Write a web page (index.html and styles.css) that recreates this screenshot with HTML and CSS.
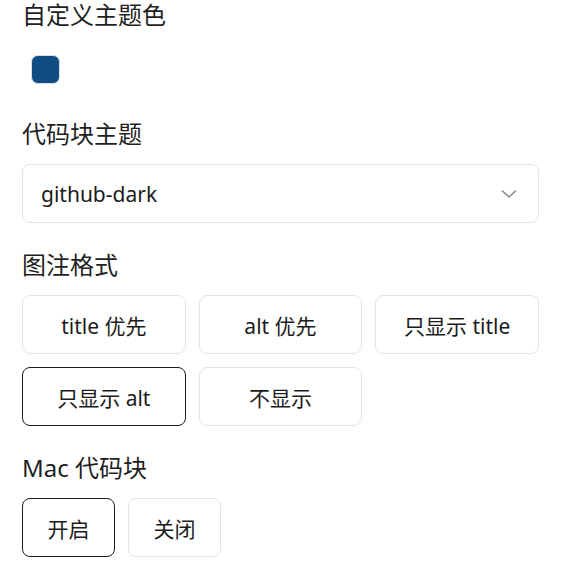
FILE: index.html
```html
<!DOCTYPE html>
<html lang="zh-CN">
<head>
<meta charset="utf-8">
<title>设置</title>
<link rel="stylesheet" href="styles.css">
</head>
<body>
<div class="panel">
  <section class="section">
    <h2 class="title">自定义主题色</h2>
    <div class="swatch-row">
      <button class="swatch" aria-label="#0f4c81"></button>
    </div>
  </section>

  <section class="section">
    <h2 class="title">代码块主题</h2>
    <div class="select">
      <span class="select-value">github-dark</span>
      <svg class="chevron" width="16" height="10" viewBox="0 0 16 10" aria-hidden="true">
        <path d="M1.5 2 L8 8 L14.5 2" fill="none" stroke="#8a8a8a" stroke-width="1.6" stroke-linecap="round" stroke-linejoin="round"/>
      </svg>
    </div>
  </section>

  <section class="section">
    <h2 class="title">图注格式</h2>
    <div class="options-grid">
      <button class="opt">title 优先</button>
      <button class="opt">alt 优先</button>
      <button class="opt">只显示 title</button>
      <button class="opt active">只显示 alt</button>
      <button class="opt">不显示</button>
    </div>
  </section>

  <section class="section">
    <h2 class="title">Mac 代码块</h2>
    <div class="options-row">
      <button class="opt pill active">开启</button>
      <button class="opt pill">关闭</button>
    </div>
  </section>
</div>
</body>
</html>
```

FILE: styles.css
```css
* {
  box-sizing: border-box;
}

html, body {
  margin: 0;
  padding: 0;
  background: #ffffff;
}

body {
  font-family: "Segoe UI", "Noto Sans", "Noto Sans CJK SC", sans-serif;
  color: #1b1b1b;
}

.panel {
  width: 517px;
  margin-left: 22px;
  display: flex;
  flex-direction: column;
  gap: 27px;
}

.section {
  display: flex;
  flex-direction: column;
  gap: 15px;
}

.title {
  margin: 0;
  font-size: 24px;
  font-weight: 400;
  line-height: 30px;
  color: #1f1f1f;
}

.swatch-row {
  padding: 10px 9px 8px;
  display: flex;
}

.swatch {
  width: 29px;
  height: 29px;
  padding: 0;
  border: 1px solid #d6dde6;
  border-radius: 7px;
  background: #0f4c81;
}

.select {
  height: 59px;
  border: 1px solid #e4e4e4;
  border-radius: 8px;
  display: flex;
  align-items: center;
  justify-content: space-between;
  padding: 0 21px 0 18px;
  font-size: 21px;
}

.chevron {
  display: block;
}

.options-grid {
  display: grid;
  grid-template-columns: repeat(3, 1fr);
  gap: 13px;
}

.options-row {
  display: flex;
  gap: 13px;
}

.opt {
  height: 59px;
  border: 1px solid #e4e4e4;
  border-radius: 8px;
  background: #ffffff;
  font-family: inherit;
  font-size: 21px;
  color: #1b1b1b;
  padding: 0 10px;
}

.opt.active {
  border-color: #1b1b1b;
}

.pill {
  width: 93px;
  padding: 0;
}
```
